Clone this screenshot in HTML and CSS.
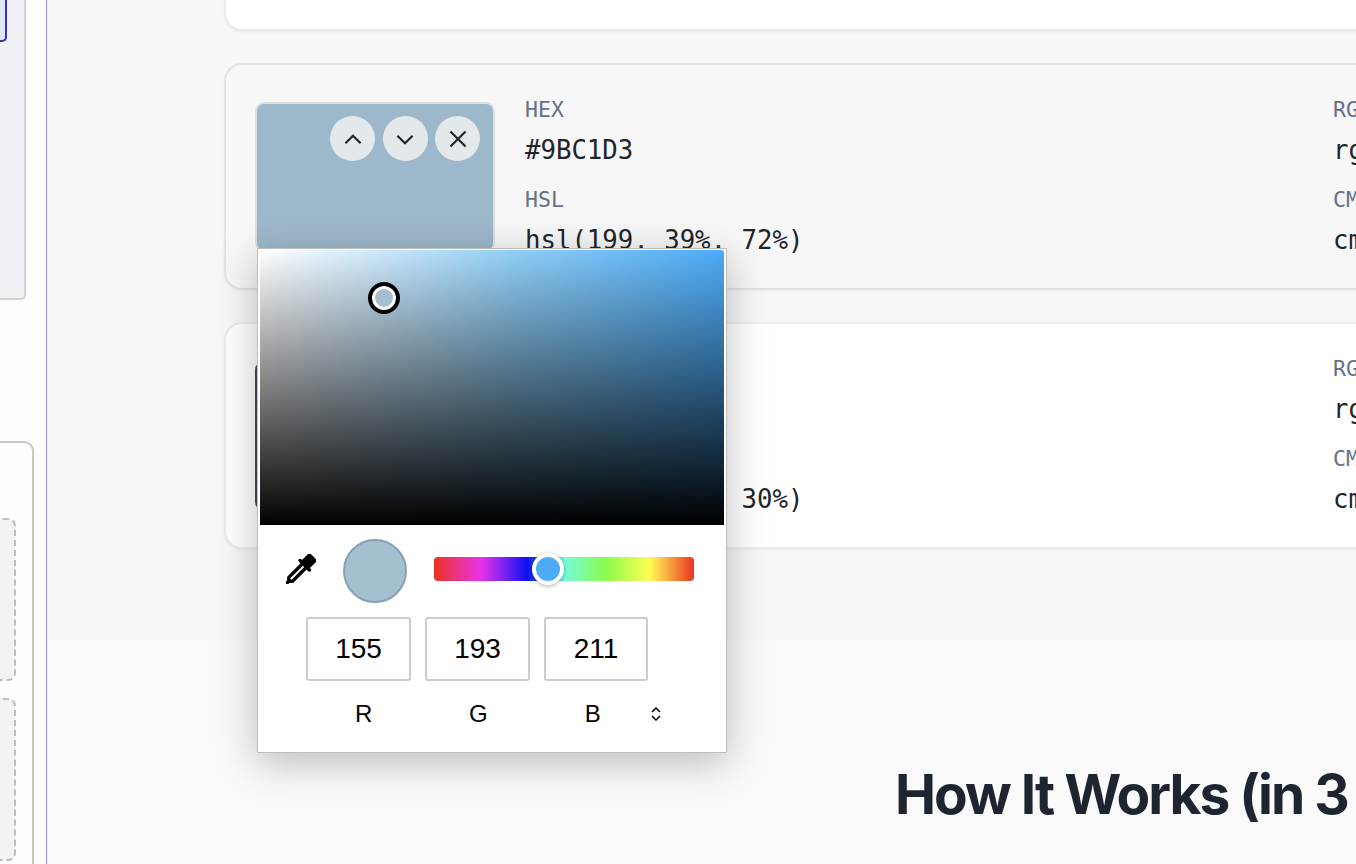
FILE: index.html
```html
<!DOCTYPE html>
<html lang="en">
<head>
  <meta charset="UTF-8">
  <title>Palette</title>
  <link rel="stylesheet" href="styles.css">
</head>
<body>
  <aside class="side">
    <div class="side-panel">
      <div class="selected"></div>
    </div>
    <div class="side-box">
      <div class="drop drop-first"></div>
      <div class="drop"></div>
    </div>
  </aside>

  <main class="main">
    <section class="colors">
      <div class="card card-top"></div>

      <div class="card card-active">
        <div class="swatch swatch-blue">
          <div class="swatch-btns">
            <button class="round-btn"><svg viewBox="0 0 24 24"><path d="M5 16l7-7 7 7"/></svg></button>
            <button class="round-btn"><svg viewBox="0 0 24 24"><path d="M5 9l7 7 7-7"/></svg></button>
            <button class="round-btn"><svg viewBox="0 0 24 24"><path d="M5 5l14 14M19 5L5 19"/></svg></button>
          </div>
        </div>
        <div class="values">
          <div class="value"><span class="label">HEX</span><span class="code">#9BC1D3</span></div>
          <div class="value"><span class="label">RGB</span><span class="code">rgb(155, 193, 211)</span></div>
          <div class="value"><span class="label">HSL</span><span class="code">hsl(199, 39%, 72%)</span></div>
          <div class="value"><span class="label">CMYK</span><span class="code">cmyk(27, 9, 0, 17)</span></div>
        </div>
      </div>

      <div class="card">
        <div class="swatch swatch-dark"></div>
        <div class="values">
          <div class="value"><span class="label">HEX</span><span class="code">#444C55</span></div>
          <div class="value"><span class="label">RGB</span><span class="code">rgb(68, 76, 85)</span></div>
          <div class="value"><span class="label">HSL</span><span class="code">hsl(212, 11%, 30%)</span></div>
          <div class="value"><span class="label">CMYK</span><span class="code">cmyk(20, 11, 0, 67)</span></div>
        </div>
      </div>
    </section>

    <section class="steps">
      <h2>How It Works (in 3 Easy Steps)</h2>
    </section>
  </main>

  <!-- colour picker popup -->
  <div class="picker">
    <div class="sat-area">
      <span class="sat-pointer"></span>
    </div>
    <div class="picker-row">
      <svg class="dropper" viewBox="0 0 16 16"><path d="M13.354.646a1.207 1.207 0 0 0-1.708 0L8.5 3.793l-.646-.647a.5.5 0 1 0-.708.708L8.293 5l-7.147 7.146A.5.5 0 0 0 1 12.5v1.793l-.854.853a.5.5 0 1 0 .708.707L1.707 15H3.5a.5.5 0 0 0 .354-.146L11 7.707l1.146 1.147a.5.5 0 0 0 .708-.708l-.647-.646 3.147-3.146a1.207 1.207 0 0 0 0-1.708zM2 12.707l7-7L10.293 7l-7 7H2z"/></svg>
      <span class="preview"></span>
      <div class="hue"><span class="hue-thumb"></span></div>
    </div>
    <div class="rgb-inputs">
      <input class="rgb-input" value="155">
      <input class="rgb-input" value="193">
      <input class="rgb-input" value="211">
    </div>
    <div class="rgb-labels">
      <span>R</span>
      <span>G</span>
      <span>B</span>
      <svg class="sort" viewBox="0 0 12 14"><path d="M2 5l4-4 4 4M2 9l4 4 4-4"/></svg>
    </div>
  </div>
</body>
</html>
```

FILE: styles.css
```css
* {
  box-sizing: border-box;
}

body {
  margin: 0;
  height: 100vh;
  display: flex;
  overflow: hidden;
  background: #fdfdfd;
  color: #212529;
  font-family: "Liberation Sans", sans-serif;
}

/* left column, cut off by the window */
.side {
  flex: 0 0 47px;
  border-right: 1px solid #9f8cf8;
  overflow: hidden;
}

.side-panel {
  width: 46px;
  height: 300px;
  margin-left: -20px;
  background: #f0f1f4;
  border: 2px solid #d1d3d7;
  border-top: 0;
  border-radius: 0 0 5px 5px;
}

.selected {
  width: 26px;
  height: 42px;
  margin-left: -1px;
  background: #dfe7fb;
  border: 2px solid #3f2fb4;
  border-top: 0;
  border-radius: 0 0 5px 5px;
}

.side-box {
  width: 54px;
  height: 500px;
  margin-top: 141px;
  margin-left: -20px;
  padding: 75px 16px 0 0;
  background: #fefefe;
  border: 2px solid #c6c6c6;
  border-radius: 0 10px 0 0;
}

.drop {
  height: 163px;
  margin-top: 17px;
  background: #f2f3f5;
  border: 2px dashed #bdbdbd;
  border-radius: 0 8px 8px 0;
}

.drop-first {
  margin-top: 0;
}

.main {
  flex: 1;
  min-width: 0;
  display: flex;
  flex-direction: column;
  overflow: hidden;
}

.colors {
  flex: 0 0 640px;
  display: flex;
  flex-direction: column;
  gap: 32px;
  padding-left: 177px;
  background: #f6f7f7;
}

.card {
  flex: 0 0 227px;
  width: 1300px;
  display: flex;
  gap: 29px;
  padding: 37px 30px 0 29px;
  background: #fff;
  border: 2px solid #e9ebee;
  border-radius: 18px;
  box-shadow: 0 1px 3px rgba(0, 0, 0, 0.05);
}

.card-top {
  flex: 0 0 31px;
  padding: 0;
  border-top: 0;
  border-radius: 0 0 18px 18px;
}

.card-active {
  background: #f7f7f7;
  border-color: #e0e2e7;
}

.swatch {
  flex: 0 0 240px;
  height: 150px;
  display: flex;
  justify-content: flex-end;
  align-items: flex-start;
  padding: 12px 13px;
  border: 2px solid #dcdfe4;
  border-radius: 9px;
}

.swatch-blue {
  background: #9db8ca;
}

.swatch-dark {
  background: #444c55;
  border-color: #444c55;
}

.swatch-btns {
  display: flex;
  gap: 7.5px;
}

.round-btn {
  width: 45px;
  height: 45px;
  padding: 0;
  display: flex;
  align-items: center;
  justify-content: center;
  background: #e3e8ea;
  border: 0;
  border-radius: 50%;
}

.round-btn svg {
  width: 26px;
  height: 26px;
  fill: none;
  stroke: #212529;
  stroke-width: 2;
}

.values {
  flex: 1;
  display: grid;
  grid-template-columns: 808px 1fr;
  grid-auto-rows: 90px;
  margin-top: -8px;
  padding-left: 1px;
}

.value {
  display: flex;
  flex-direction: column;
  gap: 6px;
  white-space: nowrap;
}

.label {
  font: 21.5px/32px "DejaVu Sans Mono", monospace;
  color: #65708a;
}

.code {
  font: 25.7px/37px "DejaVu Sans Mono", monospace;
}

.steps {
  flex: 1;
  padding: 121px 0 0 848px;
  background: #fafafa;
}

.steps h2 {
  margin: 0;
  font: 700 55px/66px Inter, sans-serif;
  letter-spacing: -2px;
  white-space: nowrap;
  color: #1f2530;
}

/* picker floats over the cards */
.picker {
  position: absolute;
  top: 248px;
  left: 257px;
  width: 470px;
  height: 505px;
  padding: 1px 2px;
  background: #fff;
  border: 1px solid #bdbdbd;
  box-shadow: 0 10px 38px rgba(0, 0, 0, 0.25);
}

.sat-area {
  position: relative;
  height: 275px;
  border-radius: 0 3px 0 0;
  background:
    linear-gradient(to top, #000, rgba(0, 0, 0, 0)),
    linear-gradient(to right, #fff, #90cef6 55%, #4dabf7);
}

.sat-pointer {
  position: absolute;
  top: 32px;
  left: 108px;
  width: 32px;
  height: 32px;
  background: #a3bfd0;
  border: 4px solid #000;
  border-radius: 50%;
  box-shadow: inset 0 0 0 3px #fff;
}

.picker-row {
  display: flex;
  align-items: center;
  gap: 27px;
  margin-top: 14px;
  padding-left: 26px;
}

.dropper {
  width: 30px;
  height: 30px;
  margin-top: -4px;
  stroke: #000;
  stroke-width: 0.8;
}

.preview {
  width: 64px;
  height: 64px;
  background: #a3bfd0;
  border: 2px solid #87a1b3;
  border-radius: 50%;
}

.hue {
  position: relative;
  width: 260px;
  height: 24px;
  margin-top: -4px;
  border-radius: 4px;
  background: linear-gradient(to right, #ec3323, #e933e8 18%, #0c12f5 36%, #75fbdc 50%, #8bfb4e 66%, #fffd54 83%, #ec3323);
}

.hue-thumb {
  position: absolute;
  top: -4px;
  left: 98px;
  width: 32px;
  height: 32px;
  background: #4dabf7;
  border: 4px solid #fff;
  border-radius: 50%;
  box-shadow: 0 1px 4px rgba(0, 0, 0, 0.3);
}

.rgb-inputs {
  display: grid;
  grid-template-columns: 105px 105px 104px;
  gap: 14px;
  margin: 14px 0 0 46px;
}

.rgb-input {
  width: 100%;
  height: 64px;
  padding: 0;
  font: 28px "Liberation Sans", sans-serif;
  text-align: center;
  color: #000;
  background: #fff;
  border: 2px solid #ccc;
  border-radius: 3px;
}

.rgb-labels {
  display: flex;
  align-items: center;
  margin: 21px 0 0 46.5px;
  height: 24px;
  font-size: 24px;
  color: #000;
}

.rgb-labels span {
  flex: 0 0 114.5px;
  text-align: center;
}

.sort {
  width: 12px;
  height: 14px;
  fill: none;
  stroke: #000;
  stroke-width: 1.5;
}
```
